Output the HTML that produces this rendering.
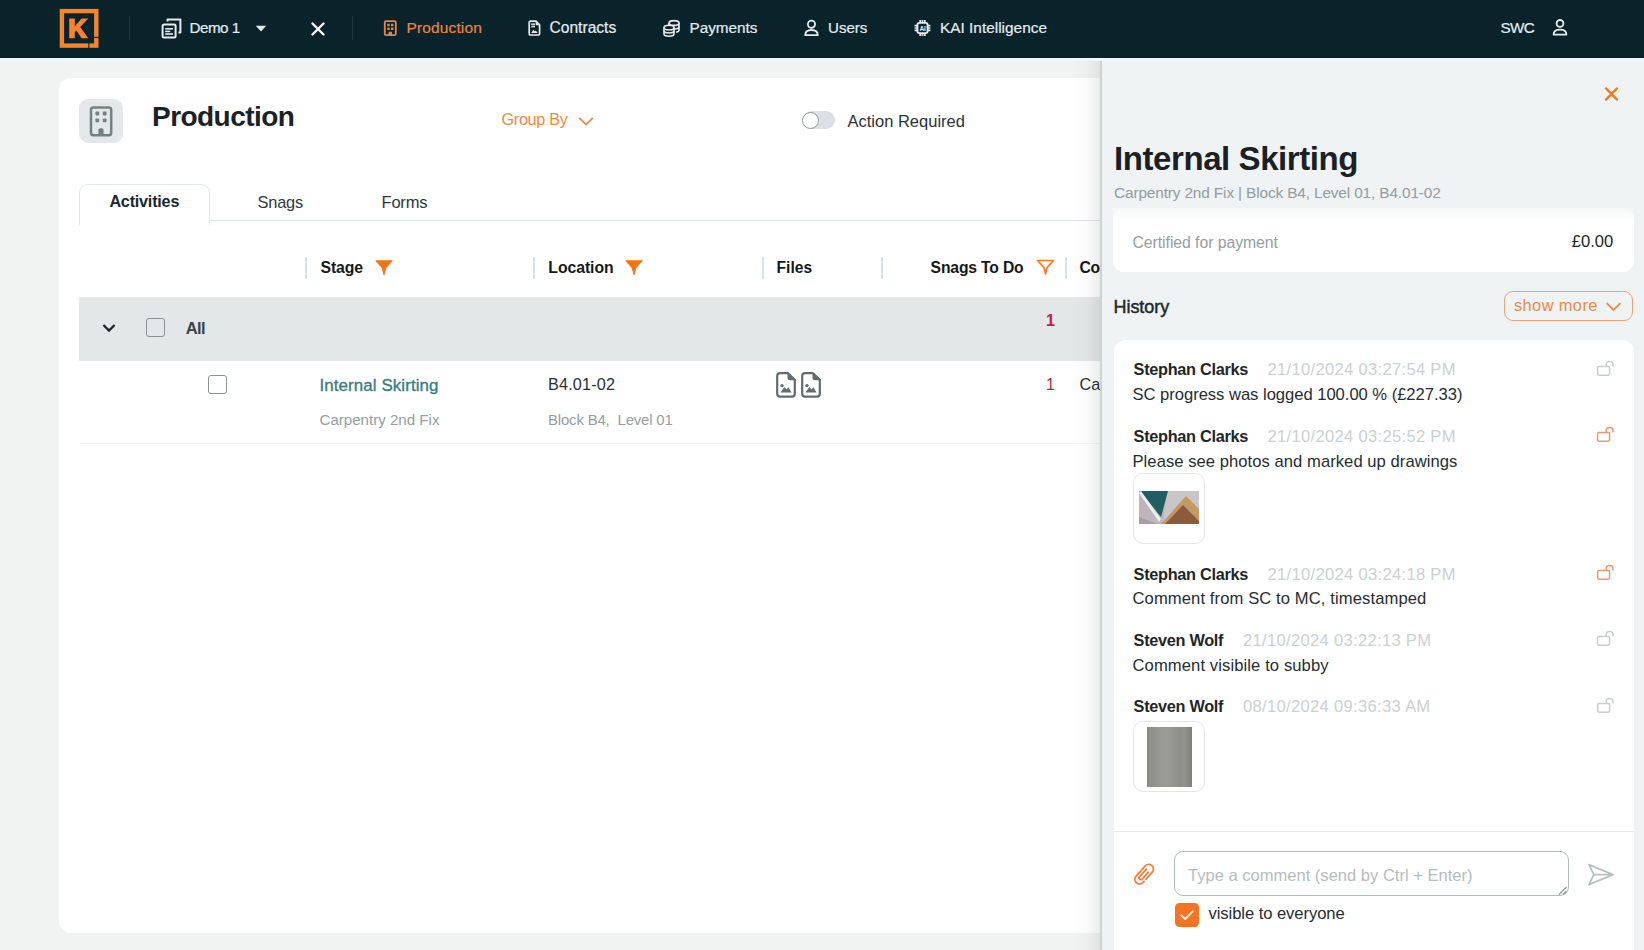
<!DOCTYPE html>
<html><head><meta charset="utf-8"><title>Production</title>
<style>
html,body{margin:0;padding:0}
body{width:1644px;height:950px;position:relative;overflow:hidden;background:#f1f3f3;font-family:"Liberation Sans",sans-serif}
.t{position:absolute;white-space:nowrap}
svg{overflow:visible}
</style></head><body>
<div style="position:absolute;left:0;top:0;width:1644px;height:58px;background:#0a232b"></div><svg style="position:absolute;left:59px;top:8px" width="41" height="41" viewBox="0 0 41 41">
<rect x="2.9" y="3.1" width="34.4" height="34.5" fill="none" stroke="#f5842c" stroke-width="4.4"/>
<rect x="35" y="28.8" width="5" height="1.1" fill="#0a232b"/>
<rect x="29.3" y="35" width="1.1" height="5" fill="#0a232b"/>
<path d="M10.2 10.4 H15.8 V18.2 L22.6 10.4 H29.2 L21.2 18.9 L29.2 30.2 H22.6 L17.4 22.6 L15.8 24.3 V30.2 H10.2 Z" fill="#f5842c"/>
</svg><div style="position:absolute;left:128.5px;top:16px;width:1.2px;height:24px;background:#1d3a42"></div><div style="position:absolute;left:351.5px;top:16px;width:1.2px;height:24px;background:#1d3a42"></div><svg style="position:absolute;left:160px;top:17px" width="23" height="23" viewBox="0 0 23 23">
<path d="M7.5 4.5 V2.6 H20.4 V15.6 H18.4" fill="none" stroke="#e4ecee" stroke-width="2" stroke-linejoin="round"/>
<rect x="2.6" y="7.6" width="13" height="13" rx="1.5" fill="none" stroke="#e4ecee" stroke-width="2"/>
<rect x="5.2" y="11" width="7.8" height="1.6" fill="#e4ecee"/>
<rect x="5.2" y="13.6" width="5" height="1.6" fill="#e4ecee"/>
<rect x="5.2" y="16.2" width="7.8" height="1.6" fill="#e4ecee"/>
</svg><div class="t" style="left:189.50px;top:18.53px;font-size:15.2px;line-height:18px;color:#e4ecee;font-weight:400;letter-spacing:-0.5px;-webkit-text-stroke:0.2px #e4ecee;">Demo 1</div>
<svg style="position:absolute;left:255px;top:25px" width="12" height="8" viewBox="0 0 12 8"><path d="M0.8 0.8 H11.2 L6 6.6 Z" fill="#e4ecee"/></svg><svg style="position:absolute;left:311px;top:21.5px" width="14" height="14" viewBox="0 0 14 14"><path d="M1.5 1.5 L12.5 12.5 M12.5 1.5 L1.5 12.5" stroke="#f4f8f9" stroke-width="2.4" stroke-linecap="round"/></svg><svg style="position:absolute;left:383px;top:19.5px" width="15" height="17" viewBox="0 0 15 17">
<rect x="1.8" y="1.2" width="11" height="14" rx="1.4" fill="none" stroke="#e8873e" stroke-width="1.8"/>
<rect x="4.3" y="3.8" width="2.4" height="2.4" fill="#e8873e"/><rect x="8" y="3.8" width="2.4" height="2.4" fill="#e8873e"/>
<rect x="4.3" y="7.6" width="2.4" height="2.4" fill="#e8873e"/><rect x="8" y="7.6" width="2.4" height="2.4" fill="#e8873e"/>
<path d="M5.6 15 V12.4 Q7.3 10.8 9 12.4 V15 Z" fill="#e8873e"/>
</svg><div class="t" style="left:406.50px;top:18.43px;font-size:15.5px;line-height:19px;color:#e8873e;font-weight:400;letter-spacing:0.13px;-webkit-text-stroke:0.2px #e8873e;">Production</div>
<svg style="position:absolute;left:527px;top:19.5px" width="15" height="17" viewBox="0 0 15 17">
<path d="M2.2 2.4 Q2.2 1.2 3.4 1.2 H9 L12.6 4.8 V13.8 Q12.6 15 11.4 15 H3.4 Q2.2 15 2.2 13.8 Z" fill="none" stroke="#e4ecee" stroke-width="1.7" stroke-linejoin="round"/>
<path d="M8.6 1.4 L12.4 5.2 H8.6 Z" fill="#e4ecee"/>
<rect x="4.2" y="3.4" width="3.8" height="1.5" fill="#e4ecee"/><rect x="4.2" y="5.8" width="3.8" height="1.5" fill="#e4ecee"/>
<path d="M4.2 13 L6.4 9.8 L7.8 11.4 L8.8 10.4 L10.6 13 Z" fill="#e4ecee"/>
</svg><div class="t" style="left:549.50px;top:18.39px;font-size:15.6px;line-height:19px;color:#e4ecee;font-weight:400;letter-spacing:0px;-webkit-text-stroke:0.2px #e4ecee;">Contracts</div>
<svg style="position:absolute;left:662px;top:19px" width="19" height="18" viewBox="0 0 19 18">
<g fill="none" stroke="#e4ecee" stroke-width="1.6">
<ellipse cx="12" cy="4" rx="5" ry="2.4"/>
<path d="M7 4 V7.6 Q7 10 12 10 Q17 10 17 7.6 V4"/>
<path d="M17 7.6 V11 Q17 12.8 14 13.2"/>
<ellipse cx="7" cy="8.6" rx="5" ry="2.4" fill="#0a232b"/>
<path d="M2 8.6 V15 Q2 17.2 7 17.2 Q12 17.2 12 15 V8.6"/>
<path d="M2 11.8 Q2 14 7 14 Q12 14 12 11.8"/>
</g></svg><div class="t" style="left:689.50px;top:19.00px;font-size:15.3px;line-height:18px;color:#e4ecee;font-weight:400;letter-spacing:0px;-webkit-text-stroke:0.2px #e4ecee;">Payments</div>
<svg style="position:absolute;left:803px;top:19px" width="17" height="18" viewBox="0 0 17 18">
<g fill="none" stroke="#e4ecee" stroke-width="1.8">
<circle cx="8.5" cy="5.2" r="3.6"/>
<path d="M2.2 16.2 Q2.2 11 8.5 11 Q14.8 11 14.8 16.2 Z" stroke-linejoin="round"/>
</g></svg><div class="t" style="left:828.00px;top:19.07px;font-size:15.1px;line-height:18px;color:#e4ecee;font-weight:400;letter-spacing:0px;-webkit-text-stroke:0.2px #e4ecee;">Users</div>
<svg style="position:absolute;left:913px;top:19px" width="19" height="18" viewBox="0 0 19 18">
<rect x="4.4" y="3.9" width="10.2" height="10.2" rx="2" fill="none" stroke="#e4ecee" stroke-width="1.9"/>
<path d="M7.2 1 V3.4 M9.5 1 V3.4 M11.8 1 V3.4 M7.2 14.6 V17 M9.5 14.6 V17 M11.8 14.6 V17 M1.6 6.7 H4 M1.6 9 H4 M1.6 11.3 H4 M15 6.7 H17.4 M15 9 H17.4 M15 11.3 H17.4" stroke="#e4ecee" stroke-width="1.7"/>
<text x="9.5" y="11.7" font-family="Liberation Sans" font-size="6.6" font-weight="700" fill="#e4ecee" text-anchor="middle" letter-spacing="-0.3">AI</text>
</svg><div class="t" style="left:940.00px;top:18.96px;font-size:15.4px;line-height:18px;color:#e4ecee;font-weight:400;letter-spacing:0px;-webkit-text-stroke:0.2px #e4ecee;">KAI Intelligence</div>
<div class="t" style="left:1500.50px;top:19.23px;font-size:15.2px;line-height:18px;color:#e4ecee;font-weight:400;letter-spacing:-0.6px;-webkit-text-stroke:0.2px #e4ecee;">SWC</div>
<svg style="position:absolute;left:1551px;top:18px" width="18" height="19" viewBox="0 0 18 19">
<g fill="none" stroke="#e4ecee" stroke-width="1.8">
<circle cx="9" cy="5.4" r="3.4"/>
<path d="M2.6 16.6 Q2.6 11.6 9 11.6 Q15.4 11.6 15.4 16.6 Z" stroke-linejoin="round"/>
</g></svg><div style="position:absolute;left:59px;top:78px;width:1525px;height:855px;background:#fff;border-radius:12px"></div><div style="position:absolute;left:79px;top:99px;width:44px;height:44px;background:#e4e8e9;border-radius:9px"></div><svg style="position:absolute;left:88px;top:105px" width="26" height="33" viewBox="0 0 26 33">
<rect x="3" y="2.4" width="20.2" height="27.8" rx="2.4" fill="none" stroke="#758082" stroke-width="2.5"/>
<rect x="7.4" y="6.6" width="3.8" height="3.8" rx="0.8" fill="#758082"/><rect x="14.8" y="6.6" width="3.8" height="3.8" rx="0.8" fill="#758082"/>
<rect x="7.4" y="13.4" width="3.8" height="3.8" rx="0.8" fill="#758082"/><rect x="14.8" y="13.4" width="3.8" height="3.8" rx="0.8" fill="#758082"/>
<path d="M10.4 30 V24.6 Q13 21.2 15.6 24.6 V30 Z" fill="#758082"/>
</svg><div class="t" style="left:152.00px;top:99.80px;font-size:28px;line-height:34px;color:#1a2225;font-weight:700;letter-spacing:-0.55px;">Production</div>
<div class="t" style="left:501.50px;top:110.39px;font-size:16.2px;line-height:19px;color:#ec8a45;font-weight:400;letter-spacing:-0.3px;">Group By</div>
<svg style="position:absolute;left:577px;top:115px" width="18" height="12" viewBox="0 0 18 12"><path d="M2.2 2.8 L9 9.6 L15.8 2.8" fill="none" stroke="#ec8a45" stroke-width="1.8"/></svg><div style="position:absolute;left:803px;top:111px;width:32px;height:18px;background:#dcdfe3;border-radius:9px"></div><div style="position:absolute;left:802px;top:111px;width:15px;height:15px;background:#fff;border:1.6px solid #8f9597;border-radius:50%;top:111.5px"></div><div class="t" style="left:847.50px;top:110.68px;font-size:16.5px;line-height:20px;color:#2b3336;font-weight:400;letter-spacing:0px;">Action Required</div>
<div style="position:absolute;left:209px;top:219.5px;width:900px;height:1.2px;background:#dce5e7"></div><div style="position:absolute;left:79px;top:183.5px;width:129px;height:40px;background:#fff;border:1.2px solid #dfe7e8;border-bottom:none;border-radius:9px 9px 0 0"></div><div class="t" style="left:109.40px;top:192.49px;font-size:16.2px;line-height:19px;color:#162a2e;font-weight:700;letter-spacing:-0.22px;">Activities</div>
<div class="t" style="left:257.50px;top:191.92px;font-size:16.4px;line-height:20px;color:#2e383b;font-weight:400;letter-spacing:-0.2px;">Snags</div>
<div class="t" style="left:381.50px;top:191.88px;font-size:16.5px;line-height:20px;color:#2e383b;font-weight:400;letter-spacing:-0.2px;">Forms</div>
<div style="position:absolute;left:304.5px;top:257px;width:2px;height:22px;background:#d3e3e6"></div><div style="position:absolute;left:533px;top:257px;width:2px;height:22px;background:#d3e3e6"></div><div style="position:absolute;left:761.5px;top:257px;width:2px;height:22px;background:#d3e3e6"></div><div style="position:absolute;left:881px;top:257px;width:2px;height:22px;background:#d3e3e6"></div><div style="position:absolute;left:1064.5px;top:257px;width:2px;height:22px;background:#d3e3e6"></div><div class="t" style="left:320.50px;top:258.23px;font-size:15.8px;line-height:19px;color:#15191b;font-weight:700;letter-spacing:-0.1px;">Stage</div>
<div class="t" style="left:548.30px;top:258.23px;font-size:15.8px;line-height:19px;color:#15191b;font-weight:700;letter-spacing:-0.07px;">Location</div>
<div class="t" style="left:776.60px;top:258.29px;font-size:15.6px;line-height:19px;color:#15191b;font-weight:700;letter-spacing:0px;">Files</div>
<div class="t" style="left:930.60px;top:258.26px;font-size:15.7px;line-height:19px;color:#15191b;font-weight:700;letter-spacing:-0.16px;">Snags To Do</div>
<div class="t" style="left:1079.50px;top:258.26px;font-size:15.7px;line-height:19px;color:#15191b;font-weight:700;letter-spacing:-0.35px;">Com</div>
<svg style="position:absolute;left:374.5px;top:259.5px" width="18" height="16" viewBox="0 0 18 16"><path d="M0.8 0.8 H17.2 L10.8 8 L9 14.8 L7.2 8 Z" fill="#f77216" stroke="#f77216" stroke-width="1" stroke-linejoin="round"/></svg><svg style="position:absolute;left:624.5px;top:259.5px" width="18" height="16" viewBox="0 0 18 16"><path d="M0.8 0.8 H17.2 L10.8 8 L9 14.8 L7.2 8 Z" fill="#f77216" stroke="#f77216" stroke-width="1" stroke-linejoin="round"/></svg><svg style="position:absolute;left:1035.5px;top:259px" width="19" height="17" viewBox="0 0 19 17"><path d="M1.5 1.5 H17.5 L11 8.6 L9.5 15 L8 8.6 Z" fill="none" stroke="#f77a2a" stroke-width="1.7" stroke-linejoin="round"/></svg><div style="position:absolute;left:79px;top:297px;width:1030px;height:64px;background:#e3e7e8"></div><svg style="position:absolute;left:101px;top:322px" width="16" height="12" viewBox="0 0 16 12"><path d="M2.4 3 L8 8.6 L13.6 3" fill="none" stroke="#1c2325" stroke-width="2.2"/></svg><div style="position:absolute;left:146px;top:318px;width:16.6px;height:16.6px;border:1.5px solid #8a9193;border-radius:3px"></div><div class="t" style="left:185.80px;top:318.48px;font-size:16.5px;line-height:20px;color:#3a4346;font-weight:700;letter-spacing:-0.6px;">All</div>
<div class="t" style="left:1045.90px;top:310.96px;font-size:16px;line-height:19px;color:#c8174a;font-weight:700;letter-spacing:0px;">1</div>
<div style="position:absolute;left:208px;top:375px;width:16.6px;height:16.6px;border:1.5px solid #8a9193;border-radius:3px"></div><div class="t" style="left:319.50px;top:375.54px;font-size:16.9px;line-height:20px;color:#3a7d84;font-weight:400;letter-spacing:0.1px;-webkit-text-stroke:0.35px #3a7d84;">Internal Skirting</div>
<div class="t" style="left:319.50px;top:411.07px;font-size:15.1px;line-height:18px;color:#959ea0;font-weight:400;letter-spacing:0px;">Carpentry 2nd Fix</div>
<div class="t" style="left:548.00px;top:375.39px;font-size:16.2px;line-height:19px;color:#2a3134;font-weight:400;letter-spacing:0.18px;">B4.01-02</div>
<div class="t" style="left:548.00px;top:411.10px;font-size:15.0px;line-height:18px;color:#959ea0;font-weight:400;letter-spacing:-0.2px;">Block B4,&nbsp; Level 01</div>
<svg style="position:absolute;left:775.5px;top:371.6px" width="20" height="26" viewBox="0 0 20 26">
<path d="M1.2 4 Q1.2 1.2 4 1.2 H12 L18.8 8 V21.8 Q18.8 24.6 16 24.6 H4 Q1.2 24.6 1.2 21.8 Z" fill="none" stroke="#626c6e" stroke-width="2.2" stroke-linejoin="round"/>
<path d="M12.2 1.4 V5.8 Q12.2 7.6 14 7.6 H18.6 Z" fill="#626c6e" stroke="#626c6e" stroke-width="1.4"/>
<circle cx="6" cy="13.6" r="1.7" fill="#626c6e"/>
<path d="M4.4 20.6 L8.4 15 L10.4 17.6 L12.4 15.2 L15.6 20.6 Z" fill="#626c6e"/>
</svg><svg style="position:absolute;left:800.5px;top:371.6px" width="20" height="26" viewBox="0 0 20 26">
<path d="M1.2 4 Q1.2 1.2 4 1.2 H12 L18.8 8 V21.8 Q18.8 24.6 16 24.6 H4 Q1.2 24.6 1.2 21.8 Z" fill="none" stroke="#626c6e" stroke-width="2.2" stroke-linejoin="round"/>
<path d="M12.2 1.4 V5.8 Q12.2 7.6 14 7.6 H18.6 Z" fill="#626c6e" stroke="#626c6e" stroke-width="1.4"/>
<circle cx="6" cy="13.6" r="1.7" fill="#626c6e"/>
<path d="M4.4 20.6 L8.4 15 L10.4 17.6 L12.4 15.2 L15.6 20.6 Z" fill="#626c6e"/>
</svg><div class="t" style="left:1045.90px;top:375.26px;font-size:16px;line-height:19px;color:#c8174a;font-weight:400;letter-spacing:0px;">1</div>
<div class="t" style="left:1079.50px;top:375.39px;font-size:16.2px;line-height:19px;color:#2a3134;font-weight:400;letter-spacing:0px;">Car</div>
<div style="position:absolute;left:79px;top:443px;width:1030px;height:1.2px;background:#f2f4f4"></div><div style="position:absolute;left:1072px;top:61px;width:28px;height:889px;background:linear-gradient(to right, rgba(0,0,0,0), rgba(0,0,0,0.02) 55%, rgba(0,0,0,0.075))"></div><div style="position:absolute;left:1100px;top:61px;width:544px;height:889px;background:#eff3f4;border-left:2px solid #cfd1d2;box-sizing:border-box"></div><div style="position:absolute;left:0;top:58px;width:1644px;height:3px;background:linear-gradient(#eef7f9,#f1f5f5)"></div><svg style="position:absolute;left:1603px;top:86px" width="17" height="16" viewBox="0 0 17 16"><path d="M3 2.4 L14 13.6 M14 2.4 L3 13.6" stroke="#f07a22" stroke-width="2.3" stroke-linecap="round"/></svg><div class="t" style="left:1114.00px;top:139.17px;font-size:33px;line-height:40px;color:#1a2125;font-weight:700;letter-spacing:-0.42px;">Internal Skirting</div>
<div class="t" style="left:1114.00px;top:183.66px;font-size:15.4px;line-height:18px;color:#939c9e;font-weight:400;letter-spacing:-0.14px;">Carpentry 2nd Fix | Block B4, Level 01, B4.01-02</div>
<div style="position:absolute;left:1113px;top:208px;width:520.5px;height:64px;background:#fff;border-radius:11px"></div><div style="position:absolute;left:1113px;top:208px;width:520.5px;height:12px;background:linear-gradient(#f6f8f8,rgba(255,255,255,0))"></div><div class="t" style="left:1132.50px;top:232.53px;font-size:15.8px;line-height:19px;color:#959ea0;font-weight:400;letter-spacing:-0.06px;">Certified for payment</div>
<div class="t" style="left:1571.70px;top:231.75px;font-size:16.6px;line-height:20px;color:#1e2427;font-weight:400;letter-spacing:0px;">£0.00</div>
<div class="t" style="left:1113.50px;top:296.06px;font-size:18px;line-height:22px;color:#20282b;font-weight:400;letter-spacing:-0.05px;-webkit-text-stroke:0.45px #20282b;">History</div>
<div style="position:absolute;left:1503.5px;top:291px;width:127px;height:27.5px;border:1.3px solid #eba37c;border-radius:9px"></div><div class="t" style="left:1514.00px;top:294.92px;font-size:16.4px;line-height:20px;color:#ec8a45;font-weight:400;letter-spacing:0.4px;">show more</div>
<svg style="position:absolute;left:1604px;top:300px" width="19" height="13" viewBox="0 0 19 13"><path d="M2.6 3.2 L9.5 10 L16.4 3.2" fill="none" stroke="#ec8a45" stroke-width="1.8"/></svg><div style="position:absolute;left:1113.5px;top:339.5px;width:520px;height:620px;background:#fff;border-radius:12px"></div><div class="t" style="left:1133.60px;top:359.35px;font-size:16.3px;line-height:20px;color:#1f2629;font-weight:700;letter-spacing:-0.3px;">Stephan Clarks</div>
<div class="t" style="left:1267.50px;top:360.45px;font-size:16.6px;line-height:20px;color:#ccd0d2;font-weight:400;letter-spacing:0.3px;">21/10/2024 03:27:54 PM</div>
<div class="t" style="left:1132.50px;top:384.95px;font-size:16.6px;line-height:20px;color:#262d30;font-weight:400;letter-spacing:-0.03px;">SC progress was logged 100.00 % (£227.33)</div>
<svg style="position:absolute;left:1595px;top:359.8px" width="21" height="17" viewBox="0 0 21 17">
<rect x="2.6" y="6.6" width="12" height="8.6" rx="1.4" fill="none" stroke="#c9cdcf" stroke-width="1.5"/>
<path d="M11.2 6.6 V4.6 Q11.2 1.6 14.6 1.6 Q18 1.6 18 4.6 V6.4" fill="none" stroke="#c9cdcf" stroke-width="1.5"/>
</svg><div class="t" style="left:1133.60px;top:425.55px;font-size:16.3px;line-height:20px;color:#1f2629;font-weight:700;letter-spacing:-0.3px;">Stephan Clarks</div>
<div class="t" style="left:1267.50px;top:426.65px;font-size:16.6px;line-height:20px;color:#ccd0d2;font-weight:400;letter-spacing:0.3px;">21/10/2024 03:25:52 PM</div>
<div class="t" style="left:1132.50px;top:451.65px;font-size:16.6px;line-height:20px;color:#262d30;font-weight:400;letter-spacing:0.05px;">Please see photos and marked up drawings</div>
<svg style="position:absolute;left:1595px;top:426.0px" width="21" height="17" viewBox="0 0 21 17">
<rect x="2.6" y="6.6" width="12" height="8.6" rx="1.4" fill="none" stroke="#e69a6a" stroke-width="1.5"/>
<path d="M11.2 6.6 V4.6 Q11.2 1.6 14.6 1.6 Q18 1.6 18 4.6 V6.4" fill="none" stroke="#e69a6a" stroke-width="1.5"/>
</svg><div class="t" style="left:1133.60px;top:563.95px;font-size:16.3px;line-height:20px;color:#1f2629;font-weight:700;letter-spacing:-0.3px;">Stephan Clarks</div>
<div class="t" style="left:1267.50px;top:565.05px;font-size:16.6px;line-height:20px;color:#ccd0d2;font-weight:400;letter-spacing:0.3px;">21/10/2024 03:24:18 PM</div>
<div class="t" style="left:1132.50px;top:589.45px;font-size:16.6px;line-height:20px;color:#262d30;font-weight:400;letter-spacing:0.1px;">Comment from SC to MC, timestamped</div>
<svg style="position:absolute;left:1595px;top:564.4px" width="21" height="17" viewBox="0 0 21 17">
<rect x="2.6" y="6.6" width="12" height="8.6" rx="1.4" fill="none" stroke="#e69a6a" stroke-width="1.5"/>
<path d="M11.2 6.6 V4.6 Q11.2 1.6 14.6 1.6 Q18 1.6 18 4.6 V6.4" fill="none" stroke="#e69a6a" stroke-width="1.5"/>
</svg><div class="t" style="left:1133.60px;top:629.55px;font-size:16.3px;line-height:20px;color:#1f2629;font-weight:700;letter-spacing:-0.3px;">Steven Wolf</div>
<div class="t" style="left:1243.00px;top:630.65px;font-size:16.6px;line-height:20px;color:#ccd0d2;font-weight:400;letter-spacing:0.3px;">21/10/2024 03:22:13 PM</div>
<div class="t" style="left:1132.50px;top:655.55px;font-size:16.6px;line-height:20px;color:#262d30;font-weight:400;letter-spacing:0.1px;">Comment visibile to subby</div>
<svg style="position:absolute;left:1595px;top:630.0px" width="21" height="17" viewBox="0 0 21 17">
<rect x="2.6" y="6.6" width="12" height="8.6" rx="1.4" fill="none" stroke="#c9cdcf" stroke-width="1.5"/>
<path d="M11.2 6.6 V4.6 Q11.2 1.6 14.6 1.6 Q18 1.6 18 4.6 V6.4" fill="none" stroke="#c9cdcf" stroke-width="1.5"/>
</svg><div class="t" style="left:1133.60px;top:696.05px;font-size:16.3px;line-height:20px;color:#1f2629;font-weight:700;letter-spacing:-0.3px;">Steven Wolf</div>
<div class="t" style="left:1243.00px;top:697.15px;font-size:16.6px;line-height:20px;color:#ccd0d2;font-weight:400;letter-spacing:0.3px;">08/10/2024 09:36:33 AM</div>
<svg style="position:absolute;left:1595px;top:696.5px" width="21" height="17" viewBox="0 0 21 17">
<rect x="2.6" y="6.6" width="12" height="8.6" rx="1.4" fill="none" stroke="#c9cdcf" stroke-width="1.5"/>
<path d="M11.2 6.6 V4.6 Q11.2 1.6 14.6 1.6 Q18 1.6 18 4.6 V6.4" fill="none" stroke="#c9cdcf" stroke-width="1.5"/>
</svg><div style="position:absolute;left:1133px;top:472.5px;width:69.5px;height:69.5px;border:1.2px solid #e3e6e7;border-radius:10px;background:#fff"></div><svg style="position:absolute;left:1139px;top:491px" width="60" height="33" viewBox="0 0 60 33">
<rect width="60" height="33" fill="#bdb5bb"/>
<polygon points="28,0 60,0 60,33 24,33" fill="#cac6c8"/>
<polygon points="1,0 29,0 22,26" fill="#1f5f64"/>
<polygon points="0,2 2,0 22,28 20,31" fill="#e9eef0"/>
<polygon points="22,33 47,5 60,18 60,33" fill="#c29a63"/>
<polygon points="26,33 44,14 60,30 60,33" fill="#8d5a3e"/>
<polygon points="0,26 18,33 0,33" fill="#a79ea3"/>
</svg><div style="position:absolute;left:1133px;top:720.5px;width:69.5px;height:69.5px;border:1.2px solid #e3e6e7;border-radius:10px;background:#fff"></div><div style="position:absolute;left:1146.5px;top:726.5px;width:45px;height:60px;background:linear-gradient(to right,#8a8a87 0%,#949491 20%,#9a9a96 45%,#8e8e8b 72%,#92928f 84%,#7e7e7b 100%)"></div><div style="position:absolute;left:1113.5px;top:830.5px;width:520px;height:1.2px;background:#e6eaeb"></div><svg style="position:absolute;left:1128px;top:858px" width="32" height="32" viewBox="0 0 32 32">
<g transform="translate(16.2 16.2) rotate(42) scale(1.13) translate(-5.15 -11)" fill="none" stroke="#ec8443" stroke-width="1.7" stroke-linecap="round">
<path d="M9.3 13.2 V4.9 A4.15 4.15 0 0 0 1 4.9 V17.1 A4.15 4.15 0 0 0 9.3 17.1 V15.8"/>
<path d="M3.6 6.4 V15.4 A1.55 1.55 0 0 0 6.7 15.4 V7.4"/>
</g></svg><div style="position:absolute;left:1174px;top:851px;width:392.5px;height:43px;border:1.6px solid #b3babc;border-radius:9px"></div><svg style="position:absolute;left:1556px;top:884px" width="12" height="12" viewBox="0 0 12 12"><path d="M10.5 3 L3 10.5 M10.5 7 L7 10.5" stroke="#8a9092" stroke-width="1.1"/></svg><div class="t" style="left:1188.00px;top:865.48px;font-size:16.5px;line-height:20px;color:#b5bcbe;font-weight:400;letter-spacing:0.02px;">Type a comment (send by Ctrl + Enter)</div>
<svg style="position:absolute;left:1586px;top:862px" width="30" height="26" viewBox="0 0 30 26">
<path d="M3 2.6 L27 12.6 L3 22.6 L7.8 12.6 Z M7.8 12.6 H27" fill="none" stroke="#bac0c2" stroke-width="1.8" stroke-linejoin="round"/>
</svg><div style="position:absolute;left:1175px;top:903px;width:24px;height:24px;background:#f47421;border-radius:4.5px"></div><svg style="position:absolute;left:1175px;top:903px" width="24" height="24" viewBox="0 0 24 24"><path d="M6.4 12.4 L10.2 16 L17.6 8.4" fill="none" stroke="#fde9dc" stroke-width="2" stroke-linecap="round" stroke-linejoin="round"/></svg><div class="t" style="left:1208.50px;top:903.55px;font-size:16.6px;line-height:20px;color:#262d30;font-weight:400;letter-spacing:-0.07px;">visible to everyone</div>

</body></html>
